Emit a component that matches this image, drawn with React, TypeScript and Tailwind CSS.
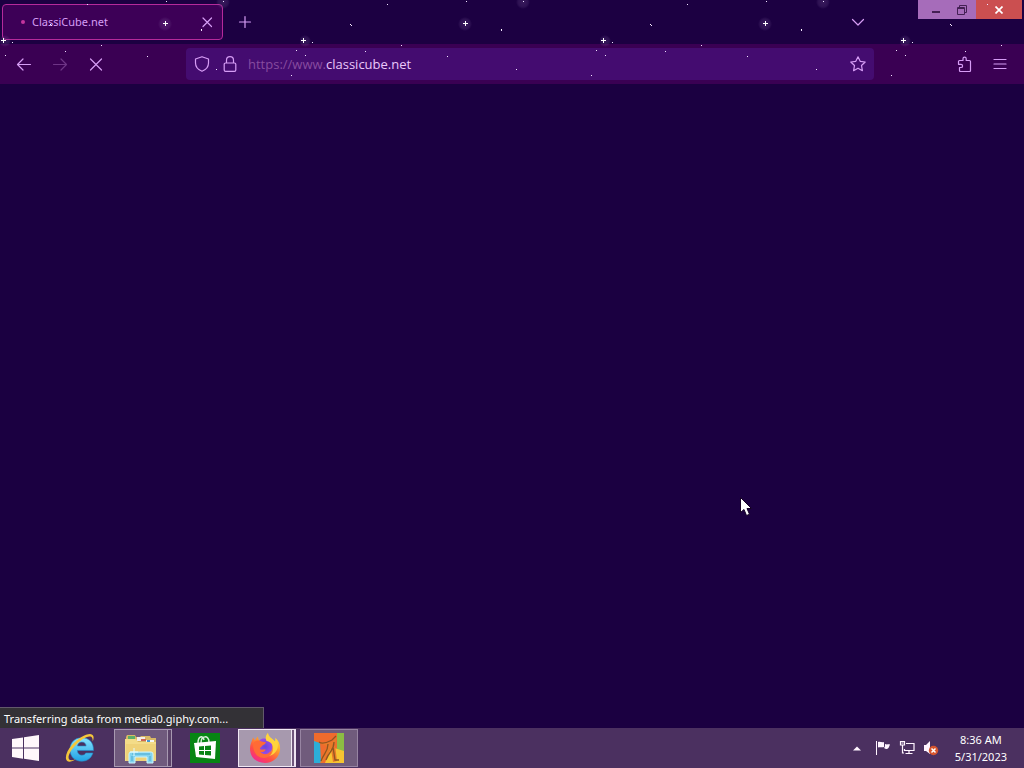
import React from "react";

const dots: [number, number][] = [
  [166, 1], [223, 1], [87, 4], [201, 30], [51, 25], [12, 42], [101, 45],
  [296, 50], [5, 55], [65, 51], [147, 56], [216, 69], [291, 75],
];
const sparkles: [number, number][] = [[165, 23], [3, 40]];

function Stars() {
  return (
    <svg className="pointer-events-none absolute inset-0 h-full w-full" shapeRendering="crispEdges" aria-hidden="true">
      <defs>
        <radialGradient id="glow">
          <stop offset="0" stopColor="#8a6aa8" stopOpacity="0.25" />
          <stop offset="0.7" stopColor="#8a6aa8" stopOpacity="0.16" />
          <stop offset="1" stopColor="#8a6aa8" stopOpacity="0" />
        </radialGradient>
        <pattern id="stars" width="300" height="90" patternUnits="userSpaceOnUse">
          <circle cx="165" cy="24" r="7" fill="url(#glow)" />
          <circle cx="5" cy="41" r="6" fill="url(#glow)" />
          <circle cx="223" cy="2" r="7" fill="url(#glow)" />
          {sparkles.map(([x, y]) => (
            <path key={x} d={`M${x - 2} ${y}h5v1h-5zM${x} ${y - 2}h1v5h-1z`} fill="#fff" />
          ))}
          {dots.map(([x, y]) => (
            <rect key={x} x={x} y={y} width="1" height="1" fill="#f1e4ff" />
          ))}
          <rect x="50" y="24" width="1" height="1" fill="#fff" />
          <rect x="201" y="29" width="1" height="1" fill="#fff" />
        </pattern>
      </defs>
      <rect width="100%" height="100%" fill="url(#stars)" />
    </svg>
  );
}

function Line({ d, label, className = "" }: { d: string; label?: string; className?: string }) {
  return (
    <svg viewBox="0 0 16 16" className={`size-4 shrink-0 ${className}`} fill="none" stroke="currentColor" strokeWidth="1.2" strokeLinecap="round" strokeLinejoin="round" role={label ? "img" : undefined} aria-label={label} aria-hidden={!label}>
      <path d={d} />
    </svg>
  );
}

const icons = {
  close: "M4 4l8.500 8.500M12.500 4L4 12.500",
  plus: "M8 2.500v11M2.500 8h11",
  down: "M2.500 5.500L8 11l5.500-5.500",
  back: "M7 3L1.500 8.500 7 14M1.500 8.500h13",
  forward: "M9 3l5.500 5.500L9 14M14.500 8.500h-13",
  stop: "M2.500 3l11 11M13.500 3l-11 11",
  shield: "M8 .7L14.500 3v4c0 4-2.800 6.800-6.500 8.300C4.300 13.800 1.500 11 1.500 7V3z",
  lock: "M4.500 7V4.200a3.500 3.500 0 0 1 7 0V7M3.500 7h9a1.300 1.300 0 0 1 1.300 1.300V14a1.300 1.300 0 0 1-1.300 1.300h-9A1.300 1.300 0 0 1 2.200 14V8.300A1.300 1.300 0 0 1 3.500 7z",
  star: "M8 .8l2.200 4.500 5 .7-3.700 3.500.9 5.200L8 12.200l-4.400 2.500.9-5.200L.8 6l5-.7z",
  puzzle: "M3.500 4.500H7V2.700a1.600 1.600 0 0 1 3.200 0V4.500H13.500a1 1 0 0 1 1 1v9a1 1 0 0 1-1 1H4.500a1 1 0 0 1-1-1V11.500H5a1.600 1.600 0 0 0 0-3.200H2.500V5.500a1 1 0 0 1 1-1",
  menu: "M2 3.500h12M2 8h12M2 12.500h12",
};

function WindowsLogo() {
  return (
    <svg viewBox="0 0 27 26" className="h-[26px] w-[27px]" fill="#fff7fb" aria-hidden="true">
      <path d="M0 4l11-1.600v10.100H0zM12 2.200L27 0v12.500H12zM0 13.500h11v10.200L0 22zM12 13.500h15V26l-15-2.200z" />
    </svg>
  );
}

function Explorer() {
  return (
    <svg viewBox="0 0 32 32" className="size-8" aria-hidden="true">
      <defs>
        <linearGradient id="ie" x2="0" y2="1"><stop stopColor="#87e3ff" /><stop offset="1" stopColor="#20a2e4" /></linearGradient>
      </defs>
      <path d="M28.500 18.500H12.300c.2 3 2 4.700 4.600 4.700 1.900 0 3.100-.7 3.800-2.200h7.200c-1.600 5.200-5.700 8.200-11.200 8.200C9.600 29.200 5 24.500 5 17.600 5 10.600 9.700 5.800 16.700 5.800c7.500 0 12 4.700 11.800 12.700zM12.500 14h8.600c-.2-2.500-1.800-3.900-4.200-3.900-2.500 0-4.100 1.400-4.400 3.900z" fill="url(#ie)" stroke="#238bc8" strokeWidth=".6" />
      <path d="M27.700 9.500C29 6.400 29 3.800 27.200 2.700 23.500.3 14 5.500 7 13 1.300 19.200-.7 26.600 2.200 29c1.800 1.500 5.300.4 8.500-1.800-3.200 1.400-5.500 1.500-6.500.3-2-2.500.8-8.300 5.200-13.100C15.500 7.700 23 2.900 26.200 4.800c1.200.7 1.500 2.400 1.500 4.700z" fill="#f4c63b" />
    </svg>
  );
}

function Folder() {
  return (
    <svg viewBox="0 0 34 32" className="h-8 w-[34px]" aria-hidden="true">
      <path d="M2 5l1-2h8l1 2h4l1-1h9l1 2h5v22H2z" fill="#d9b865" />
      <path d="M4 4h7v3H4z" fill="#5cae68" /><path d="M13 5h8v4h-8z" fill="#f3eee7" />
      <path d="M17 7h5v2h-5z" fill="#ce6552" /><path d="M22 8h8v4h-8z" fill="#f6f6f4" /><path d="M23 8h3v2h-3z" fill="#4897cf" />
      <path d="M1 7h11l2 3h18v19H1z" fill="#f4dc88" />
      <path d="M2 12h30v17H2z" fill="#efd279" />
      <path d="M5 31V22q0-2 2-2h20q2 0 2 2v9h-6v-6H11v6z" fill="#83d4ef" stroke="#cbf5ff" />
      <path d="M8 22h18M8 24v5M26 24v5" stroke="#4aa9d0" />
      <path d="M10 16v8M6 20h8" stroke="#e3fbff" />
    </svg>
  );
}

function Store() {
  return (
    <svg viewBox="0 0 30 30" className="size-[30px]" aria-hidden="true">
      <path d="M0 0h30v30H0z" fill="#078514" />
      <path d="M8 10c0-7 5-8 6-3M11 10c0-8 8-8 8-1" fill="none" stroke="#d8f1d8" strokeWidth="1.500" />
      <path d="M4 10l22-2-1 18-19-2z" fill="#fff" />
      <path d="M9 13.500l5-.5v4H9zM15 13l6-.5V17h-6zM9 18h5v4l-5-.5zM15 18h6v4.500l-6-.5z" fill="#078514" />
    </svg>
  );
}

function Firefox() {
  return (
    <svg viewBox="0 0 32 32" className="size-8" aria-hidden="true">
      <defs>
        <linearGradient id="fire" x1=".85" y1="0" x2=".2" y2="1"><stop stopColor="#fff54b" /><stop offset=".35" stopColor="#ffa629" /><stop offset=".7" stopColor="#ff4d45" /><stop offset="1" stopColor="#f1239b" /></linearGradient>
        <radialGradient id="globe"><stop stopColor="#6548de" /><stop offset="1" stopColor="#9b4ce2" /></radialGradient>
      </defs>
      <path d="M19 1c0 4 4 5 6.500 8.200 1.200 0 1-2.200.8-3.200C30 9 31.500 13 31 18c-.9 7.500-7 13-15 13C7 31 1 25 1 16.800 1 12 3 9.500 4 5.500c1 1 1.400 2 1.600 3C7 7 8 5.500 9 4.500c0 2 .5 3 1.500 4C14 8 15 9 17 9c-1-3 .2-6.200 2-8z" fill="url(#fire)" />
      <path d="M10.500 8.500C14 4.500 21 7 23 12c1.500 6-2 10.500-7 10.500s-8-4-7-8z" fill="url(#globe)" />
      <path d="M4 12c2-4 6-4 8.500-2.500l4.500.8c-.5 2-3 2.700-4 3.500-.6 1.500-2 1.600-2.200 3.200 2 1.500 4-.3 6 .8-1.500 2.500-4 2.500-5.500 2 2.500 3.500 8 3 10-.5 2 3-1 6.700-6 6.700C8 26 4 20.500 4 12z" fill="#ff6b36" />
      <path d="M19 1c-2 2-3 5-1.500 8 4 .5 7.500 4 6.500 9-.5 3-2 5-4 6 6-1.500 10.500-7 8.500-14.500l-2-3.500c.2 1 .3 3-1 3.200C23 6 19 5 19 1z" fill="#ffd43c" />
    </svg>
  );
}

function PaintApp() {
  return (
    <svg viewBox="0 0 30 30" className="size-[30px]" aria-hidden="true">
      <path d="M0 0h30v30H0z" fill="#ef6b2d" />
      <path d="M0 8l6 2 1 20H0z" fill="#2caed8" /><path d="M23 0h7v19l-7-3z" fill="#8cbd43" />
      <path d="M17 14l13 4v12H11z" fill="#f6c431" />
      <path d="M5 10c5-2 9 1 14-2l4-4-2 8 2 16-4 1-2-13-9 14H6l7-17z" fill="#e87a29" />
      <path d="M5 9c4 3 9 0 13-2l4-4M14 11c0 8-4 9-7 17M20 9c0 9-5 9-8 18M19 14l2 13h4" fill="none" stroke="#8e5522" strokeWidth="1.300" />
    </svg>
  );
}

function Tray() {
  return (
    <div className="flex items-center gap-2 text-[#fff5ff]">
      <button type="button" aria-label="Show hidden icons" className="mr-1.5">
        <svg viewBox="0 0 8 5" className="h-[5px] w-2"><path d="M0 4.500L4 .5l4 4z" fill="currentColor" /></svg>
      </button>
      <button type="button" aria-label="Action Center">
        <svg viewBox="0 0 16 16" className="size-4"><path d="M1.500 1v14" stroke="currentColor" /><path d="M3 2c2-.8 4 .8 6 0v5C7 8 5 6.500 3 7.500zM10 4c2 .8 3 0 5 .5-1 2-1 4-3 4.500-1 .3-2-.5-3-1 1-1 1-2 1-4z" fill="currentColor" /></svg>
      </button>
      <button type="button" aria-label="Network">
        <svg viewBox="0 0 16 16" className="size-4" fill="none" stroke="currentColor" strokeWidth="1.200"><path d="M7 3.500h8v7H5.500V9M10 10.500v3M6.500 13.500h7M1.500 1.500h4V5h-4zM3.500 5v8H5M2.500 3h2" /></svg>
      </button>
      <button type="button" aria-label="Volume muted">
        <svg viewBox="0 0 16 16" className="size-4"><path d="M1 5h2l4-4v13l-4-3H1z" fill="currentColor" /><circle cx="10.500" cy="10.500" r="4.700" fill="#d7552e" /><path d="M8.500 8.500l4 4M12.500 8.500l-4 4" stroke="#fff" strokeWidth="1.500" /></svg>
      </button>
    </div>
  );
}

const iconButton = "flex size-9 items-center justify-center";

export default function App() {
  return (
    <div className="relative flex h-screen cursor-default flex-col overflow-hidden bg-[#1b0041] font-['Noto_Sans','Open_Sans',sans-serif] text-[#d69df5]">
      <header className="relative shrink-0 bg-[#1c0042]">
        <div className="flex h-11 items-start justify-between">
          <div className="flex items-center pt-1 pl-0.5">
            <div className="flex h-9 w-[221px] items-center rounded border border-[#b52a9b] bg-[#3d0057] pr-[7px] pl-[18px]">
              <span className="size-1 rounded-full bg-[#c4359d]" />
              <button type="button" role="tab" aria-selected="true" className="ml-[7px] flex-1 text-left text-[11px]">ClassiCube.net</button>
              <button type="button" aria-label="Close tab"><Line d={icons.close} /></button>
            </div>
            <button type="button" aria-label="New tab" className="ml-1 flex size-9 items-center justify-center"><Line d={icons.plus} /></button>
          </div>
          <div className="flex items-start">
            <button type="button" aria-label="List all tabs" className="mt-1 mr-[42px] flex size-9 items-center justify-center"><Line d={icons.down} /></button>
            <div className="mr-0.5 flex h-[19px] bg-[#a66cba] text-[#442054]">
              <button type="button" aria-label="Minimize" className="flex w-8 items-end justify-center pb-[6px] pl-1"><span className="h-0.5 w-2 bg-current" /></button>
              <button type="button" aria-label="Restore" className="flex w-[26px] items-center pl-[7px]">
                <svg viewBox="0 0 10 10" className="size-[10px]" fill="none" stroke="currentColor"><path d="M.5 2.500h7v7h-7zM.5 3.500h7M2.500 2V.5h7v7H8" /></svg>
              </button>
              <button type="button" aria-label="Close" className="flex w-[46px] items-center justify-center bg-[#cb4f50] text-white">
                <svg viewBox="0 0 8 8" className="size-2" stroke="currentColor" strokeWidth="1.700"><path d="M.5.500l7 7M7.500.500l-7 7" /></svg>
              </button>
            </div>
          </div>
        </div>
        <nav className="flex h-10 items-center bg-[#3a0053] px-1.5" aria-label="Browser">
          <button type="button" aria-label="Back" className={iconButton}><Line d={icons.back} /></button>
          <button type="button" aria-label="Forward" disabled className="flex size-9 items-center justify-center text-[#6e3486]"><Line d={icons.forward} /></button>
          <button type="button" aria-label="Stop" className={iconButton}><Line d={icons.stop} /></button>
          <form className="relative mr-[72px] ml-[72px] flex h-8 min-w-0 flex-1 items-center rounded bg-[#440c70] px-2" onSubmit={(e) => e.preventDefault()}>
            <Line d={icons.shield} label="Tracking protection" />
            <Line d={icons.lock} label="Secure connection" className="ml-3" />
            <div className="relative ml-2.5 flex-1 font-['Open_Sans',sans-serif] text-[13px] leading-5">
              <input aria-label="Address" defaultValue="https://www.classicube.net" className="block w-full bg-transparent text-transparent outline-none" />
              <span aria-hidden="true" className="pointer-events-none absolute inset-0 whitespace-nowrap"><span className="text-[#874b9f]">https://www.</span><span className="text-[#ebc8fb]">classicube.net</span></span>
            </div>
            <button type="button" aria-label="Bookmark this page"><Line d={icons.star} /></button>
          </form>
          <button type="button" aria-label="Extensions" className={iconButton}><Line d={icons.puzzle} /></button>
          <button type="button" aria-label="Open menu" className={iconButton}><Line d={icons.menu} /></button>
        </nav>
        <Stars />
      </header>

      <main className="flex min-h-0 flex-1 flex-col justify-end">
        <div role="status" className="flex h-[21px] w-[264px] items-center border-t border-r border-[#62596b] bg-[#333136] px-1 pt-0.5 text-[11px] whitespace-nowrap text-white">Transferring data from media0.giphy.com...</div>
      </main>

      <footer className="flex h-10 shrink-0 items-center justify-between bg-[#4b3060]">
        <div className="flex h-full items-center">
          <button type="button" aria-label="Start" className="flex w-[50px] justify-center"><WindowsLogo /></button>
          <button type="button" aria-label="Internet Explorer" className="flex w-[62px] justify-center"><Explorer /></button>
          <div className="ml-0.5 flex h-[38px]">
            <button type="button" aria-label="File Explorer" className="flex w-[54px] items-center justify-center border border-[#a899b1] bg-[#705a7d]"><Folder /></button>
            <span className="w-1 border-y border-r border-[#a899b1] bg-[#5b4269]" />
          </div>
          <button type="button" aria-label="Store" className="ml-[18px]"><Store /></button>
          <div className="ml-[18px] flex h-[38px]">
            <button type="button" aria-label="Firefox" className="flex w-[54px] items-center justify-center border border-[#f1e8f4] bg-[#a799ae]"><Firefox /></button>
            <span className="w-1 border-y border-r-2 border-[#eee2f2] bg-[#70567d]" />
          </div>
          <button type="button" aria-label="Paint app" className="ml-1 flex h-[38px] w-[58px] items-center justify-center border border-[#9784a2] bg-[#705b7c]"><PaintApp /></button>
        </div>
        <div className="flex items-center pr-[17px]">
          <Tray />
          <time dateTime="2023-05-31T08:36" className="ml-4 flex flex-col text-center text-[11px] leading-[17px] text-white"><span>8:36 AM</span><span>5/31/2023</span></time>
        </div>
      </footer>

      <svg viewBox="0 0 12 19" className="pointer-events-none absolute top-[497px] left-[740px] h-[19px] w-3" aria-hidden="true">
        <path d="M.5.500v15l3.500-3 2.500 6 3-1.200L7 11.500h4.500z" fill="#fff" stroke="#140024" />
      </svg>
    </div>
  );
}
